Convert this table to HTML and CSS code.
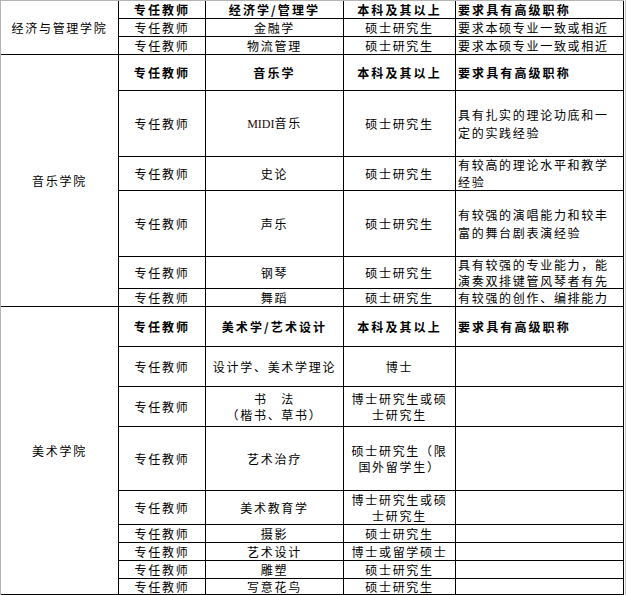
FILE: index.html
```html
<!DOCTYPE html>
<html lang="zh-CN">
<head>
<meta charset="utf-8">
<title>招聘岗位</title>
<link rel="stylesheet" href="styles.css">
</head>
<body>
<div class="page">
<table class="sheet">
<colgroup><col class="c1"><col class="c2"><col class="c3"><col class="c4"><col class="c5"></colgroup>
<tbody>
<tr class="h18 first"><td rowspan="3" class="college">经济与管理学院</td><td class="b">专任教师</td><td class="b">经济学/管理学</td><td class="b">本科及其以上</td><td class="b req">要求具有高级职称</td></tr>
<tr class="h18"><td>专任教师</td><td>金融学</td><td>硕士研究生</td><td class="req">要求本硕专业一致或相近</td></tr>
<tr class="h18"><td>专任教师</td><td>物流管理</td><td>硕士研究生</td><td class="req">要求本硕专业一致或相近</td></tr>

<tr class="h36"><td rowspan="6" class="college">音乐学院</td><td class="b">专任教师</td><td class="b">音乐学</td><td class="b">本科及其以上</td><td class="b req">要求具有高级职称</td></tr>
<tr class="h66"><td>专任教师</td><td><span class="latin">MIDI</span>音乐</td><td>硕士研究生</td><td class="req lh18">具有扎实的理论功底和一<br>定的实践经验</td></tr>
<tr class="h34"><td>专任教师</td><td>史论</td><td>硕士研究生</td><td class="req lh165">有较高的理论水平和教学<br>经验</td></tr>
<tr class="h66"><td>专任教师</td><td>声乐</td><td>硕士研究生</td><td class="req lh175">有较强的演唱能力和较丰<br>富的舞台剧表演经验</td></tr>
<tr class="h32"><td>专任教师</td><td>钢琴</td><td>硕士研究生</td><td class="req lh155">具有较强的专业能力，能<br>演奏双排键管风琴者有先</td></tr>
<tr class="h18"><td>专任教师</td><td>舞蹈</td><td>硕士研究生</td><td class="req">有较强的创作、编排能力</td></tr>

<tr class="h40"><td rowspan="9" class="college">美术学院</td><td class="b">专任教师</td><td class="b">美术学/艺术设计</td><td class="b">本科及其以上</td><td class="b req">要求具有高级职称</td></tr>
<tr class="h40"><td>专任教师</td><td>设计学、美术学理论</td><td>博士</td><td class="req"></td></tr>
<tr class="h40"><td>专任教师</td><td class="lh16">书　法<br>（楷书、草书）</td><td class="lh155">博士研究生或硕<br>士研究生</td><td class="req"></td></tr>
<tr class="h64"><td>专任教师</td><td>艺术治疗</td><td class="lh16">硕士研究生（限<br>国外留学生）</td><td class="req"></td></tr>
<tr class="h34"><td>专任教师</td><td>美术教育学</td><td class="lh155">博士研究生或硕<br>士研究生</td><td class="req"></td></tr>
<tr class="h18"><td>专任教师</td><td>摄影</td><td>硕士研究生</td><td class="req"></td></tr>
<tr class="h18"><td>专任教师</td><td>艺术设计</td><td>博士或留学硕士</td><td class="req"></td></tr>
<tr class="h18"><td>专任教师</td><td>雕塑</td><td>硕士研究生</td><td class="req"></td></tr>
<tr class="h16"><td>专任教师</td><td>写意花鸟</td><td>硕士研究生</td><td class="req"></td></tr>
</tbody>
</table>
</div>
</body>
</html>
```

FILE: styles.css
```css
html, body {
  margin: 0;
  padding: 0;
  background: #ffffff;
}

.page {
  width: 625px;
  height: 595px;
  border-right: 1px solid #c4c4c4;
  overflow: hidden;
}

.sheet {
  border-collapse: separate;
  border-spacing: 0;
  table-layout: fixed;
  width: 624px;
  border-left: 1px solid #b4b4b4;
  border-top: 1px solid #b4b4b4;
  font-family: "Noto Sans CJK SC", "Noto Sans", sans-serif;
  font-size: 12px;
  color: #000;
}

.c1 { width: 118px; }
.c2 { width: 87px; }
.c3 { width: 138px; }
.c4 { width: 112px; }
.c5 { width: 168px; }

.sheet td {
  box-sizing: border-box;
  padding: 0;
  border-right: 1px solid #000;
  border-bottom: 1px solid #000;
  text-align: center;
  vertical-align: middle;
  line-height: 15px;
  letter-spacing: 1.7px;
  white-space: nowrap;
  overflow: hidden;
}

.sheet td.req {
  text-align: left;
  padding-left: 2px;
}

.sheet td.b {
  font-weight: bold;
  letter-spacing: 2.1px;
}

.latin {
  font-family: "Liberation Serif", serif;
  letter-spacing: 0;
  color: #1a0a0a;
}

.h16 { height: 16px; }
.h18 { height: 18px; }
.h32 { height: 32px; }
.h34 { height: 34px; }
.h36 { height: 36px; }
.h40 { height: 40px; }
.h64 { height: 64px; }
.h66 { height: 66px; }

.sheet td.lh18 { line-height: 18px; }
.sheet td.lh175 { line-height: 17.5px; }
.sheet td.lh165 { line-height: 16.5px; }
.sheet td.lh16 { line-height: 16px; }
.sheet td.lh155 { line-height: 15.5px; }
```
